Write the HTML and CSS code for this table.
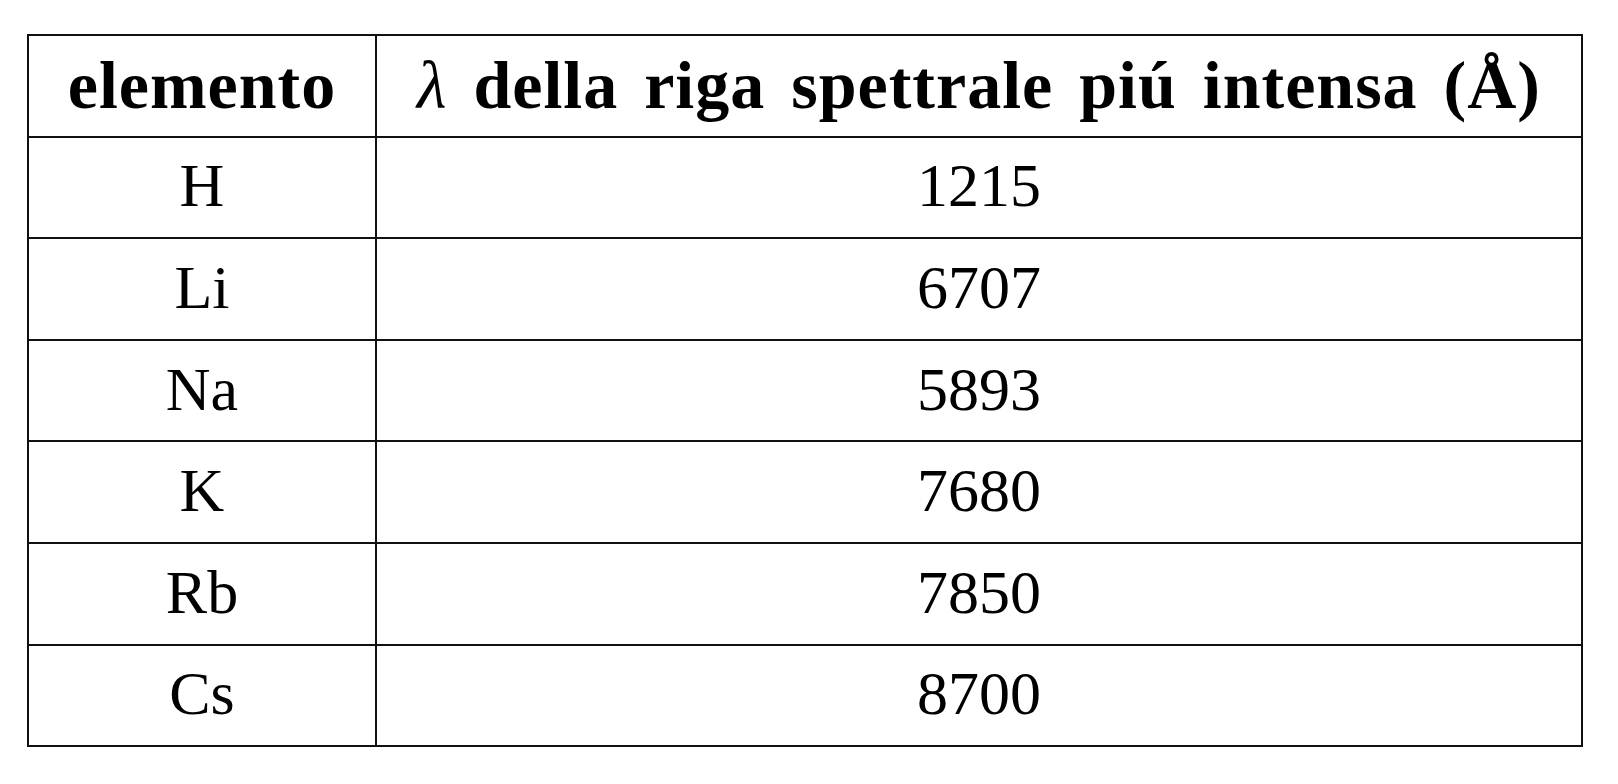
FILE: index.html
```html
<!DOCTYPE html>
<html>
<head>
    <meta charset="utf-8">
    <title>Righe spettrali</title>
    <link rel="stylesheet" href="styles.css">
</head>
<body>
    <table class="righe">
        <tr class="intest">
            <th class="col-el">elemento</th>
            <th><span class="lambda">λ</span> della riga spettrale piú intensa (Å)</th>
        </tr>
        <tr><td>H</td><td>1215</td></tr>
        <tr><td>Li</td><td>6707</td></tr>
        <tr><td>Na</td><td>5893</td></tr>
        <tr><td>K</td><td>7680</td></tr>
        <tr><td>Rb</td><td>7850</td></tr>
        <tr><td>Cs</td><td>8700</td></tr>
    </table>
</body>
</html>
```
FILE: styles.css
```css
html,
body {
    margin: 0px;
    padding: 0px;
    background-color: white;
}

table.righe {
    margin: 34px 0px 0px 27px;
    width: 1556px;
    border-collapse: collapse;
    font-family: "Liberation Serif", "Times New Roman", serif;
    color: black;
}

table.righe th,
table.righe td {
    border: 2px solid #111;
    text-align: center;
    vertical-align: middle;
    padding: 0px;
}

table.righe th {
    height: 99.6px;
    font-size: 68px;
    font-weight: bold;
    letter-spacing: 1px;
    word-spacing: 8px;
}

table.righe td {
    height: 96.6px;
    padding-bottom: 3px;
    font-size: 62px;
    font-weight: normal;
}

th.col-el {
    width: 346px;
}

span.lambda {
    font-style: italic;
    font-weight: normal;
}
```
